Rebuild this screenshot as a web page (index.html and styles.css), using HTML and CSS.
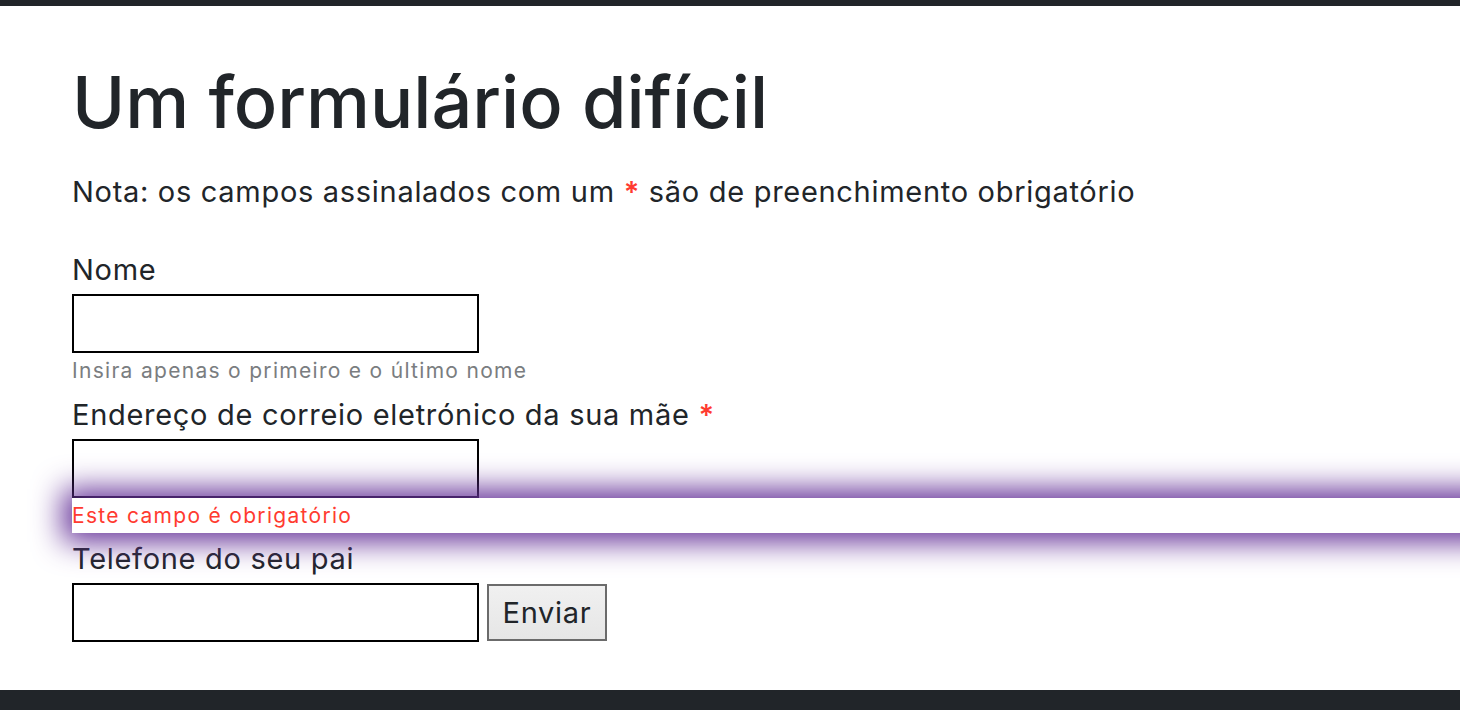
FILE: index.html
```html
<!DOCTYPE html>
<html lang="pt">
<head>
<meta charset="utf-8">
<title>Um formulário difícil</title>
<link rel="stylesheet" href="styles.css">
</head>
<body>
<header class="topbar"></header>
<main class="page">
  <h1 class="title">Um formulário difícil</h1>
  <p class="note">Nota: os campos assinalados com um <span class="req">*</span> são de preenchimento obrigatório</p>
  <form class="form">
    <div class="field">
      <label class="label" for="nome">Nome</label>
      <input class="input" id="nome" type="text">
      <small class="hint">Insira apenas o primeiro e o último nome</small>
    </div>
    <div class="field">
      <label class="label" for="email">Endereço de correio eletrónico da sua mãe <span class="req">*</span></label>
      <input class="input" id="email" type="email">
      <small class="error">Este campo é obrigatório</small>
    </div>
    <div class="field">
      <label class="label" for="tel">Telefone do seu pai</label>
      <div class="row">
        <input class="input" id="tel" type="tel">
        <button class="submit" type="submit">Enviar</button>
      </div>
    </div>
  </form>
</main>
<footer class="bottombar"></footer>
</body>
</html>
```
FILE: styles.css
```css
* { box-sizing: border-box; }
html, body { margin: 0; padding: 0; }
body {
  font-family: Inter, "Noto Sans", sans-serif;
  color: #212529;
  background: #fff;
  overflow: hidden;
  height: 710px;
  display: flex;
  flex-direction: column;
}
.topbar { height: 6px; background: #212529; flex: none; }
.bottombar { height: 20px; background: #212529; flex: none; margin-top: auto; }
.page { padding: 0 0 0 72px; }
.title {
  font-size: 72px;
  font-weight: 500;
  line-height: 86px;
  margin: 53px 0 0 0;
}
.note {
  font-size: 29px;
  letter-spacing: 0.7px;
  line-height: 44px;
  margin: 25px 0 0;
}
.req { color: #ff3b30; font-weight: 600; }
.form { margin-top: 30px; display: flex; flex-direction: column; }
.field { display: flex; flex-direction: column; align-items: flex-start; }
.label {
  font-size: 29px;
  letter-spacing: 0.7px;
  line-height: 44px;
  margin: 4px 0 2px;
}
.input {
  width: 407px; height: 59px;
  border: 2px solid #000;
  margin: 0;
  background: #fff;
}
.hint {
  font-size: 21px;
  letter-spacing: 1.3px;
  color: #7a7d80;
  line-height: 36px;
}
.error {
  font-size: 21px;
  letter-spacing: 1.3px;
  color: #ff3b30;
  line-height: 36px;
  height: 35px;
  background: #fff;
  width: calc(100% + 200px);
  box-shadow: 0 0 30px 9px #663399;
  position: relative;
  z-index: 1;
}
.row { display: flex; align-items: flex-start; gap: 8px; }
.submit {
  font-family: inherit;
  font-size: 29px;
  letter-spacing: 0.7px;
  color: #212529;
  width: 120px;
  height: 57px;
  padding: 0;
  border: 2px solid #6b6b6b;
  background: linear-gradient(#f0f0f0, #e6e6e6);
  margin-top: 1px;
}
```
